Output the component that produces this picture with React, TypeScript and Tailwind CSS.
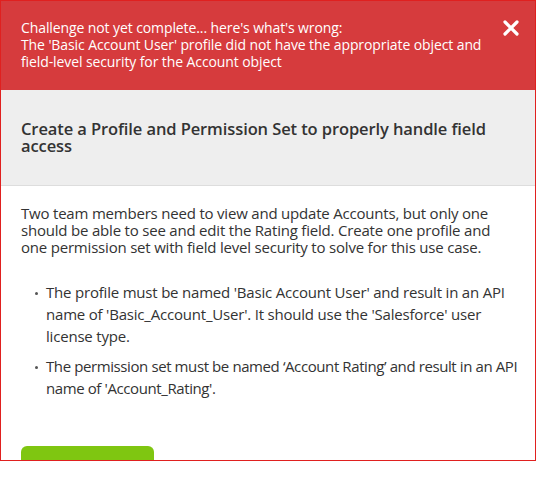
import React from "react";

const font = { fontFamily: '"Open Sans", "Liberation Sans", sans-serif' };

function CloseIcon() {
  return (
    <svg width="16" height="16" viewBox="0 0 16 16" aria-hidden="true">
      <path d="M2 2 L14 14 M14 2 L2 14" stroke="#fff" strokeWidth="3.2" strokeLinecap="round" />
    </svg>
  );
}

function Dot() {
  return <span className="absolute -left-[11px] top-[11px] h-[3px] w-[3px] rounded-full bg-[#555555]" />;
}

export default function App() {
  return (
    <div className="h-[485px] w-[537px] bg-white" style={font}>
      <div className="flex h-[461px] w-[536px] flex-col overflow-hidden border border-[#e0201f] bg-white">
        <div className="flex h-[89px] shrink-0 items-start justify-between bg-[#d63b3d] pl-[20px] pr-[16px] pt-[18px]">
          <div className="text-[14px] leading-[17px] tracking-[-0.1px] text-white">
            <p>Challenge not yet complete... here's what's wrong:</p>
            <p>
              The 'Basic Account User' profile did not have the appropriate object and
              field-level security for the Account object
            </p>
          </div>
          <button type="button" className="mt-[1px]">
            <CloseIcon />
          </button>
        </div>

        <div className="h-[96px] shrink-0 border-b border-[#dddddd] bg-[#eeeeee] px-[20px] pt-[30px]">
          <h2 className="text-[16.5px] font-semibold leading-[17px] tracking-[-0.1px] text-[#333333]">
            Create a Profile and Permission Set to properly handle field access
          </h2>
        </div>

        <div className="px-[20px] pt-[19px] text-[15px] tracking-[-0.2px] text-[#333333]">
          <p className="leading-[17px]">
            Two team members need to view and update Accounts, but only one should be able to see
            and edit the Rating field. Create one profile and one permission set with field level
            security to solve for this use case.
          </p>
          <ul className="-mr-[12px] mt-[25px] flex flex-col gap-[8px] pl-[25px] text-[15px] leading-[22px]">
            <li className="relative">
              <Dot />
              The profile must be named 'Basic Account User' and result in an API name of
              'Basic_Account_User'. It should use the 'Salesforce' user license type.
            </li>
            <li className="relative tracking-[-0.4px]">
              <Dot />
              The permission set must be named ‘Account Rating’ and result in an API name of
              'Account_Rating'.
            </li>
          </ul>
          <button
            type="button"
            className="mt-[47px] h-[40px] w-[133px] rounded-[6px] bg-[#7fc611]"
          />
        </div>
      </div>
    </div>
  );
}
